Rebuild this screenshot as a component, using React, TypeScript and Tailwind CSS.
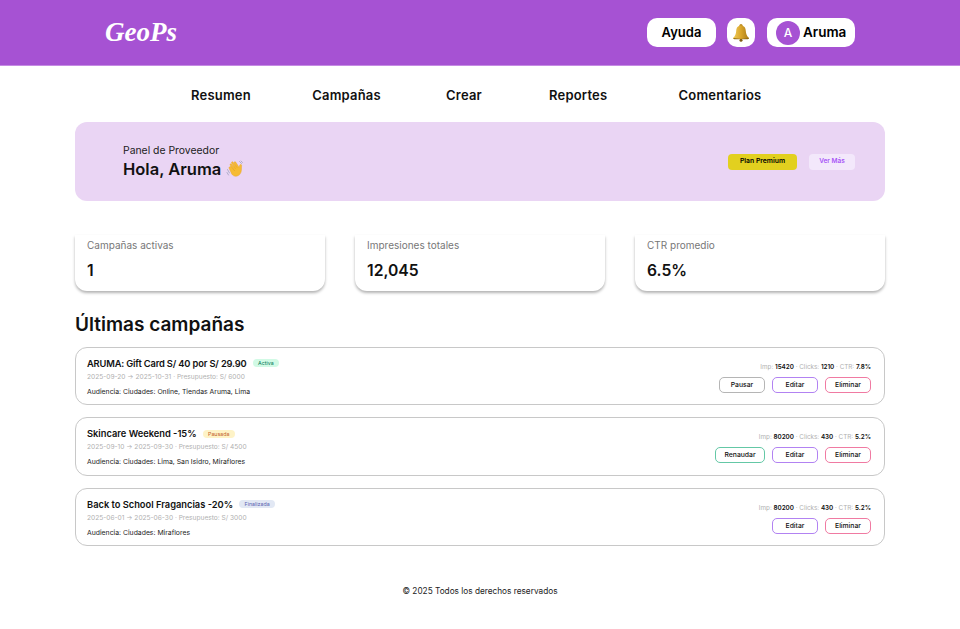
import React from 'react';

const font = { fontFamily: 'Inter, "Liberation Sans", sans-serif' };

const navItems = [
  { label: 'Resumen', className: 'w-[59px]' },
  { label: 'Campañas', className: 'ml-[61px] w-[71px]' },
  { label: 'Crear', className: 'ml-[64px] w-[36px]' },
  { label: 'Reportes', className: 'ml-[67px] w-[57px]' },
  { label: 'Comentarios', className: 'ml-[72px] w-[84px]' },
];

const stats = [
  { label: 'Campañas activas', value: '1' },
  { label: 'Impresiones totales', value: '12,045' },
  { label: 'CTR promedio', value: '6.5%' },
];

interface Campaign {
  title: string;
  titleClass?: string;
  status: string;
  statusClass: string;
  dates: string;
  audience: string;
  imp: string;
  clicks: string;
  ctr: string;
  action?: string;
  actionClass?: string;
}

const campaigns: Campaign[] = [
  {
    title: 'ARUMA: Gift Card S/ 40 por S/ 29.90',
    titleClass: 'tracking-[-0.15px]',
    status: 'Activa',
    statusClass: 'bg-[#d1fae5] text-[#047857]',
    dates: '2025-09-20 → 2025-10-31 · Presupuesto: S/ 6000',
    audience: 'Audiencia: Ciudades: Online, Tiendas Aruma, Lima',
    imp: '15420',
    clicks: '1210',
    ctr: '7.8%',
    action: 'Pausar',
    actionClass: 'w-[46px] border-[#b5b5b5]',
  },
  {
    title: 'Skincare Weekend -15%',
    status: 'Pausada',
    statusClass: 'bg-[#fef3c7] text-[#c2622d]',
    dates: '2025-09-10 → 2025-09-30 · Presupuesto: S/ 4500',
    audience: 'Audiencia: Ciudades: Lima, San Isidro, Miraflores',
    imp: '80200',
    clicks: '430',
    ctr: '5.2%',
    action: 'Renaudar',
    actionClass: 'w-[50px] border-[#64c8a6]',
  },
  {
    title: 'Back to School Fragancias -20%',
    status: 'Finalizada',
    statusClass: 'bg-[#e2e8f4] text-[#5a62b0]',
    dates: '2025-06-01 → 2025-06-30 · Presupuesto: S/ 3000',
    audience: 'Audiencia: Ciudades: Miraflores',
    imp: '80200',
    clicks: '430',
    ctr: '5.2%',
  },
];

const BellIcon = () => (
  <svg width="20" height="20" viewBox="0 0 20 20">
    <defs>
      <linearGradient id="bell" x1="0" y1="0" x2="1" y2="0">
        <stop offset="0" stopColor="#f0cc5a" />
        <stop offset="0.5" stopColor="#d9a52a" />
        <stop offset="1" stopColor="#a87a18" />
      </linearGradient>
    </defs>
    <circle cx="10" cy="2.600" r="1.600" fill="#b98a20" />
    <path d="M10 2.500c-3.200 0-4.600 2.400-4.800 5.400-.2 3-1 5-3 6.800-.5.500-.2 1.300.6 1.300h14.400c.8 0 1.100-.8.600-1.300-2-1.800-2.800-3.800-3-6.800C14.600 4.900 13.200 2.500 10 2.500z" fill="url(#bell)" />
    <path d="M2.600 15.100c4.500 1.100 10.300 1.100 14.800 0 .2.700-.1 1.200-.7 1.200H3.300c-.6 0-.9-.5-.7-1.200z" fill="#8f6a14" />
    <circle cx="10" cy="17.300" r="1.500" fill="#7f5c10" />
  </svg>
);

const WaveIcon = () => (
  <svg width="18" height="18" viewBox="0 0 18 18">
    <path d="M1.500 9.500 3.500 13M1 12.500l1.500 2.500" stroke="#a9a9c4" strokeWidth="0.9" strokeLinecap="round" fill="none" />
    <path d="M13.500 1.500 15.500 3.500M15 1l1.500 1.500" stroke="#a9a9c4" strokeWidth="0.9" strokeLinecap="round" fill="none" />
    <path d="M5 6.500 8.800 11 4.300 5.300c-.8-1 .5-2 1.300-1.100L9.500 8.700 5.700 3.200c-.7-1 .7-2 1.400-1l3.900 5.400L8.200 3c-.6-1 .8-1.900 1.500-.9l3.500 5.300.5-2.200c.3-1.200 1.900-1 1.900.2l-.2 4.700c-.1 3.300-2.300 6-5.300 6.200-2 .1-3.300-.8-4.300-2.200L3.200 8.500c-.8-1.100.7-2.300 1.800-2z" fill="#f6bb33" stroke="#e59e1c" strokeWidth="0.4" />
  </svg>
);

const Stat = ({ label, value }: { label: string; value: string }) => (
  <div className="h-14 rounded-b-xl bg-white px-3 pt-[2px] shadow-[0_2px_3px_rgba(0,0,0,0.3)]">
    <div className="text-[10px] leading-[16px] text-[#777777]">{label}</div>
    <div className="mt-[7px] text-[15.700px] font-semibold leading-[22px] text-[#111111]">{value}</div>
  </div>
);

const CampaignCard = ({ c }: { c: Campaign }) => (
  <div className="flex h-[58.700px] justify-between rounded-xl border border-[#c8c8c8] bg-white pl-[11px] pr-[13px]">
    <div className="pt-[9px]">
      <div className="flex items-center gap-[6px]">
        <span className={`text-[9.300px] font-semibold leading-[13px] text-[#111111] ${c.titleClass ?? ''}`}>{c.title}</span>
        <span className={`rounded-full px-[5.500px] text-[5.300px] leading-[8px] ${c.statusClass}`}>{c.status}</span>
      </div>
      <div className="mt-[2px] text-[6.600px] leading-[11px] text-[#b0b0b0]">{c.dates}</div>
      <div className="mt-[3px] text-[6.850px] leading-[11px] text-[#222222]">{c.audience}</div>
    </div>
    <div className="flex flex-col items-end pt-[14px]">
      <div className="text-[6.300px] leading-[10px] text-[#b0b0b0]">
        Imp: <b className="font-semibold text-[#111111]">{c.imp}</b> · Clicks: <b className="font-semibold text-[#111111]">{c.clicks}</b> · CTR: <b className="font-semibold text-[#111111]">{c.ctr}</b>
      </div>
      <div className="mt-[5px] flex gap-[7px]">
        {c.action && (
          <button className={`h-4 rounded-[5px] border bg-white text-[6.800px] font-medium text-[#111111] ${c.actionClass}`}>
            {c.action}
          </button>
        )}
        <button className="h-4 w-[46px] rounded-[5px] border border-[#b282f2] bg-white text-[6.800px] font-medium text-[#111111]">Editar</button>
        <button className="h-4 w-[46px] rounded-[5px] border border-[#f07aa2] bg-white text-[6.800px] font-medium text-[#111111]">Eliminar</button>
      </div>
    </div>
  </div>
);

export default function App() {
  return (
    <div className="min-h-[629px] bg-white" style={font}>
      <header className="flex h-[66px] items-center justify-between border-b border-[#c58be3] bg-[#a652d3] pl-[105px] pr-[105px]">
        <div className="text-[27px] font-bold italic leading-none text-white" style={{ fontFamily: '"Liberation Serif", serif' }}>GeoPs</div>
        <div className="flex items-center gap-[11px]">
          <button className="h-[29px] w-[69px] rounded-[10px] bg-white text-[13px] font-semibold text-black">Ayuda</button>
          <div className="flex h-[29px] w-[28px] items-center justify-center rounded-[10px] bg-white"><BellIcon /></div>
          <div className="ml-px flex h-[29px] w-[88px] items-center gap-[3px] rounded-[10px] bg-white pl-[9px]">
            <span className="flex h-6 w-6 items-center justify-center rounded-full bg-[#a652d3] text-[12px] font-medium text-white">A</span>
            <span className="text-[13.500px] font-semibold text-black">Aruma</span>
          </div>
        </div>
      </header>

      <main className="mx-auto w-[810px]">
        <nav className="flex h-[56px] items-center pl-[116px] pt-[3px] text-[13px] font-semibold tracking-[0.2px] text-[#111111]">
          {navItems.map((item) => (
            <span key={item.label} className={`shrink-0 whitespace-nowrap text-center ${item.className}`}>{item.label}</span>
          ))}
        </nav>

        <section className="flex h-[79px] items-center justify-between rounded-xl bg-[#ead5f4] pl-12 pr-[30px]">
          <div>
            <div className="text-[10.400px] leading-[15px] text-[#222222]">Panel de Proveedor</div>
            <div className="flex items-center gap-[5px] text-[16.500px] font-semibold leading-[22px] text-[#111111]">
              Hola, Aruma <WaveIcon />
            </div>
          </div>
          <div className="flex items-center gap-[12px]">
            <span className="flex h-4 w-[69px] items-center justify-center rounded-[4px] bg-[#e2d01f] text-[6.800px] font-semibold text-black">Plan Premium</span>
            <span className="flex h-4 w-[46px] items-center justify-center rounded-[4px] bg-[#f3e8fb] text-[6.500px] font-semibold text-[#a855f7]">Ver Más</span>
          </div>
        </section>

        <section className="mt-[34px] grid grid-cols-3 gap-[30px]">
          {stats.map((s) => (
            <Stat key={s.label} label={s.label} value={s.value} />
          ))}
        </section>

        <h2 className="mt-[20px] text-[19px] font-semibold leading-[28px] text-[#111111]">Últimas campañas</h2>

        <section className="mt-[7.800px] flex flex-col gap-[11.800px]">
          {campaigns.map((c) => (
            <CampaignCard key={c.title} c={c} />
          ))}
        </section>

        <footer className="mt-[39px] text-center text-[8.250px] leading-[12px] text-[#222222]">© 2025 Todos los derechos reservados</footer>
      </main>
    </div>
  );
}
